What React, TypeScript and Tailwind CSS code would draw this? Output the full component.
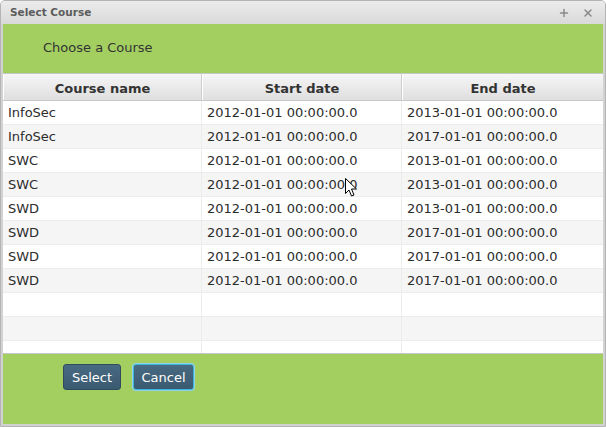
import { Plus, X } from 'lucide-react'

const rows = [
  ['InfoSec', '2012-01-01 00:00:00.0', '2013-01-01 00:00:00.0'],
  ['InfoSec', '2012-01-01 00:00:00.0', '2017-01-01 00:00:00.0'],
  ['SWC', '2012-01-01 00:00:00.0', '2013-01-01 00:00:00.0'],
  ['SWC', '2012-01-01 00:00:00.0', '2013-01-01 00:00:00.0'],
  ['SWD', '2012-01-01 00:00:00.0', '2013-01-01 00:00:00.0'],
  ['SWD', '2012-01-01 00:00:00.0', '2017-01-01 00:00:00.0'],
  ['SWD', '2012-01-01 00:00:00.0', '2017-01-01 00:00:00.0'],
  ['SWD', '2012-01-01 00:00:00.0', '2017-01-01 00:00:00.0'],
  ['', '', ''],
  ['', '', ''],
  ['', '', ''],
]

const font = { fontFamily: '"DejaVu Sans", sans-serif' }

export default function App() {
  return (
    <div
      style={font}
      className="relative w-[606px] h-[427px] flex flex-col bg-[#d2d2d2] border border-[#b4b4b4] rounded-t-[5px] overflow-hidden"
    >
      {/* title bar */}
      <div className="h-[23px] shrink-0 flex items-center justify-between pl-[9px] pr-[11px] bg-gradient-to-b from-[#ececec] to-[#d9d9d9]">
        <span className="text-[10.5px] font-bold text-[#5c5c5c]">Select Course</span>
        <div className="flex items-center gap-[12px] text-[#8a8a8a]">
          <Plus size={12} strokeWidth={3} />
          <X size={12} strokeWidth={3} />
        </div>
      </div>

      <div className="flex-1 flex flex-col px-[2px] pb-[2px]">
        <div className="h-[49px] shrink-0 bg-[#a3cf61] flex items-center pl-[40px] pb-[1px] text-[13px] text-[#333]">
          Choose a Course
        </div>

        <div className="shrink-0 bg-white border-y border-[#c6c6c6]">
          <div className="grid grid-cols-[199px_200px_1fr] h-[27px] border-b border-[#c9c9c9] bg-gradient-to-b from-[#f6f6f6] to-[#dfdfdf]">
            {['Course name', 'Start date', 'End date'].map((h, i) => (
              <div
                key={h}
                className={`flex items-center justify-center pt-[3px] text-[13px] font-bold text-[#333] border-l border-white ${i < 2 ? 'border-r border-r-[#cdcdcd]' : ''}`}
              >
                {h}
              </div>
            ))}
          </div>
          <div className="h-[252px] overflow-hidden">
            {rows.map((r, i) => (
              <div
                key={i}
                className={`grid grid-cols-[199px_200px_1fr] h-[24px] border-b border-[#ececec] ${i % 2 ? 'bg-[#f5f5f5]' : 'bg-white'}`}
              >
                {r.map((c, j) => (
                  <div
                    key={j}
                    className={`flex items-center pl-[5px] text-[13px] text-[#2c2c2c] ${j < 2 ? 'border-r border-[#ececec]' : ''}`}
                  >
                    {c}
                  </div>
                ))}
              </div>
            ))}
          </div>
        </div>

        <div className="flex-1 bg-[#a3cf61] flex items-start gap-[12px] pl-[60px] pt-[10px]">
          <button className="h-[26px] w-[58px] pt-[1px] rounded-[3px] border border-[#2f4b5d] bg-gradient-to-b from-[#486a82] to-[#3a5a70] text-[13px] text-white">
            Select
          </button>
          <button className="h-[26px] w-[61px] pt-[1px] rounded-[3px] border border-[#3db4de] shadow-[0_0_0_1px_#8fd3ec] bg-gradient-to-b from-[#486a82] to-[#3a5a70] text-[13px] text-white">
            Cancel
          </button>
        </div>
      </div>

      {/* mouse pointer */}
      <svg className="absolute left-[344px] top-[177px]" width="13" height="20" viewBox="0 0 13 20">
        <path d="M0.5 0.5 L0.5 15.5 L4 12 L6.5 18 L9 17 L6.5 11 L11.5 11 Z" fill="#fff" stroke="#000" strokeWidth="1" strokeLinejoin="round" />
      </svg>
    </div>
  )
}
